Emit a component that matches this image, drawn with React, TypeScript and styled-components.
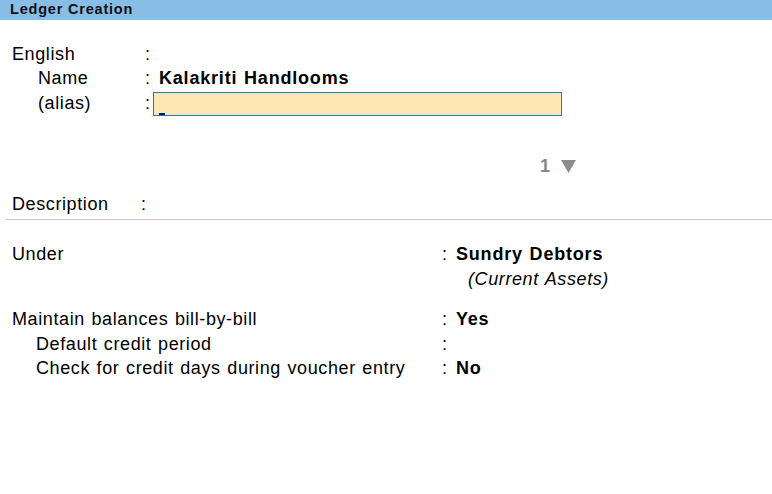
import React from 'react';
import styled, { createGlobalStyle } from 'styled-components';

const GlobalStyle = createGlobalStyle`
  html, body {
    margin: 0;
    padding: 0;
    background: #ffffff;
  }
  body {
    font-family: "Liberation Sans", Arial, sans-serif;
    color: #000000;
  }
`;

export default function App(): React.ReactElement {
  return (
    <>
      <GlobalStyle />
      <Screen>
        <TitleBar>Ledger Creation</TitleBar>

        <NameBlock>
          <Row>
            <Label width={133}>English</Label>
            <Colon>:</Colon>
          </Row>
          <Row>
            <Label width={133} indent={26}>Name</Label>
            <Colon>:</Colon>
            <Value>Kalakriti Handlooms</Value>
          </Row>
          <Row>
            <Label width={133} indent={26}>(alias)</Label>
            <Colon narrow>:</Colon>
            <AliasInput>
              <Caret />
            </AliasInput>
          </Row>
        </NameBlock>

        <Counter>
          <span>1</span>
          <svg width="15" height="13" viewBox="0 0 15 13">
            <path d="M0 0 H15 L7.5 13 Z" fill="#8c8c8c" />
          </svg>
        </Counter>

        <Row>
          <Label width={129}>Description</Label>
          <Colon>:</Colon>
        </Row>
        <Divider />

        <DetailBlock>
          <Row>
            <Label width={430}>Under</Label>
            <Colon>:</Colon>
            <Value>Sundry Debtors</Value>
          </Row>
          <SubNote>(Current Assets)</SubNote>
        </DetailBlock>

        <DetailBlock>
          <Row>
            <Label width={430}>Maintain balances bill-by-bill</Label>
            <Colon>:</Colon>
            <Value>Yes</Value>
          </Row>
          <Row>
            <Label width={430} indent={24}>Default credit period</Label>
            <Colon>:</Colon>
          </Row>
          <Row>
            <Label width={430} indent={24}>Check for credit days during voucher entry</Label>
            <Colon>:</Colon>
            <Value>No</Value>
          </Row>
        </DetailBlock>
      </Screen>
    </>
  );
}

const Screen = styled.div`
  width: 772px;
  height: 494px;
  background: #ffffff;
  overflow: hidden;
  font-size: 18px;
  letter-spacing: 0.6px;
  word-spacing: 1px;
`;

const TitleBar = styled.div`
  height: 20px;
  line-height: 19px;
  padding-left: 10px;
  background: #88bde6;
  font-size: 14.5px;
  letter-spacing: 0.8px;
  word-spacing: 0;
  font-weight: bold;
  color: #111111;
`;

const NameBlock = styled.div`
  padding-top: 22px;
`;

const Row = styled.div`
  display: flex;
  align-items: center;
  height: 24.5px;
  padding-left: 12px;
`;

const Label = styled.div<{ width: number; indent?: number }>`
  flex: none;
  width: ${(p) => p.width - (p.indent ?? 0)}px;
  padding-left: ${(p) => p.indent ?? 0}px;
  white-space: nowrap;
`;

const Colon = styled.div<{ narrow?: boolean }>`
  flex: none;
  width: ${(p) => (p.narrow ? 8 : 14)}px;
`;

const Value = styled.div`
  font-weight: bold;
  letter-spacing: 0.8px;
  white-space: nowrap;
`;

const AliasInput = styled.div`
  position: relative;
  width: 407px;
  height: 22px;
  margin-top: 2px;
  background: #fde7b3;
  border: 1px solid #1e7bb5;
`;

const Caret = styled.span`
  position: absolute;
  left: 5px;
  bottom: 0;
  width: 6px;
  height: 2px;
  background: #0b1a5c;
`;

const Counter = styled.div`
  display: flex;
  align-items: center;
  gap: 10px;
  height: 24px;
  margin-top: 38.5px;
  margin-bottom: 14px;
  padding-left: 540px;
  color: #888888;
  font-weight: bold;
`;

const Divider = styled.div`
  height: 1px;
  margin: 2px 0 0 6px;
  background: #c8c8c8;
`;

const DetailBlock = styled.div`
  padding-top: 23px;
  & + & {
    padding-top: 16px;
  }
`;

const SubNote = styled.div`
  height: 24.5px;
  line-height: 24.5px;
  padding-left: 468px;
  font-style: italic;
`;
